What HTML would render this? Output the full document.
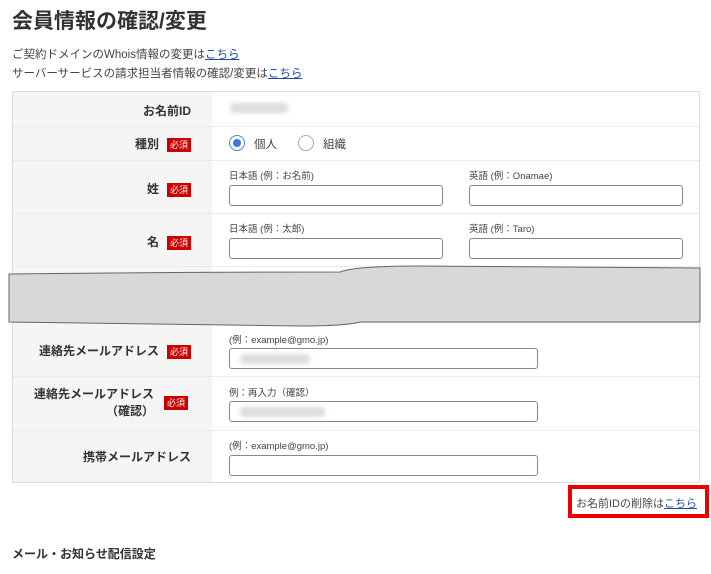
<!DOCTYPE html>
<html><head><meta charset="utf-8"><style>
*{margin:0;padding:0;box-sizing:border-box}
body{width:711px;height:574px;background:#fff;position:relative;overflow:hidden;font-family:"Liberation Sans","Noto Sans CJK JP",sans-serif;color:#333}
.a{position:absolute;white-space:nowrap}
h1{position:absolute;left:12px;top:5px;font-size:21px;font-weight:bold;color:#333}
.t{font-size:11.5px;color:#444}
a{color:#1a4fa0;text-decoration:underline}
.tbl{position:absolute;left:12px;top:91px;width:688px;height:392px;border:1px solid #ddd;background:#fff}
.lab{position:absolute;left:0;width:199px;background:#f5f5f5}
.row{position:absolute;left:0;width:686px;border-top:1px dotted #ddd}
.lb{position:absolute;right:508px;font-size:12px;font-weight:bold;color:#333;white-space:nowrap;text-align:right}
.req{display:inline-block;background:#c00;color:#fff;font-size:9px;padding:1px 3px;font-weight:normal;line-height:12px;margin-left:8px;vertical-align:middle}
.inp{position:absolute;height:21px;border:1px solid #888;border-radius:3px;background:#fff}
.blur{position:absolute;background:#ddd;border-radius:4px;filter:blur(2px)}
.sm{position:absolute;font-size:9.5px;color:#444;white-space:nowrap}
</style></head><body>
<h1>会員情報の確認/変更</h1>
<div class="a t" style="left:12px;top:46px">ご契約ドメインのWhois情報の変更は<a>こちら</a></div>
<div class="a t" style="left:12px;top:65px">サーバーサービスの請求担当者情報の確認/変更は<a>こちら</a></div>
<div class="tbl">
<div class="lab" style="top:0;height:390px"></div>
<div class="row" style="top:34px"></div>
<div class="row" style="top:68px"></div>
<div class="row" style="top:121px"></div>
<div class="row" style="top:174px"></div>
<div class="row" style="top:230px"></div>
<div class="row" style="top:284px"></div>
<div class="row" style="top:338px"></div>
<div class="lb" style="top:10px">お名前ID</div>
<div class="blur" style="left:217px;top:11px;width:58px;height:10px"></div>
<div class="lb" style="top:43px">種別<span class="req">必須</span></div>
<div class="a" style="left:216px;top:43px;width:16px;height:16px;border:1px solid #4a7fd8;border-radius:50%"><div style="position:absolute;left:3px;top:3px;width:8px;height:8px;border-radius:50%;background:#3a78e0"></div></div>
<div class="a t" style="left:241px;top:44px">個人</div>
<div class="a" style="left:285px;top:43px;width:16px;height:16px;border:1px solid #aaa;border-radius:50%"></div>
<div class="a t" style="left:310px;top:44px">組織</div>
<div class="lb" style="top:88px">姓<span class="req">必須</span></div>
<div class="sm" style="left:216px;top:76px">日本語 (例：お名前)</div>
<div class="sm" style="left:456px;top:76px">英語 (例：Onamae)</div>
<div class="inp" style="left:216px;top:93px;width:214px"></div>
<div class="inp" style="left:456px;top:93px;width:214px"></div>
<div class="lb" style="top:141px">名<span class="req">必須</span></div>
<div class="sm" style="left:216px;top:129px">日本語 (例：太郎)</div>
<div class="sm" style="left:456px;top:129px">英語 (例：Taro)</div>
<div class="inp" style="left:216px;top:146px;width:214px"></div>
<div class="inp" style="left:456px;top:146px;width:214px"></div>
<div class="lb" style="top:250px">連絡先メールアドレス<span class="req">必須</span></div>
<div class="sm" style="left:216px;top:240px">(例：example@gmo.jp)</div>
<div class="inp" style="left:216px;top:256px;width:309px"><div class="blur" style="left:10px;top:5px;width:70px;height:10px"></div></div>
<div class="lb" style="top:294px;right:545px;line-height:17px">連絡先メールアドレス<br>（確認）</div>
<div class="req a" style="left:151px;top:304px;margin:0">必須</div>
<div class="sm" style="left:216px;top:293px">例：再入力（確認）</div>
<div class="inp" style="left:216px;top:309px;width:309px"><div class="blur" style="left:10px;top:5px;width:85px;height:10px"></div></div>
<div class="lb" style="top:356px">携帯メールアドレス</div>
<div class="sm" style="left:216px;top:346px">(例：example@gmo.jp)</div>
<div class="inp" style="left:216px;top:363px;width:309px"></div>
</div>
<svg class="a" style="left:0;top:262px" width="711" height="70"><path d="M9 12 Q180 10 340 10 Q355 4 420 4 L700 6 L700 60 L360 60 Q345 64 300 64 L9 60 Z" fill="#d8d8d8" stroke="#666" stroke-width="1"/></svg>
<div class="a" style="left:568px;top:485px;width:141px;height:33px;border:4px solid #e00;font-size:11px;color:#444;padding:6px 0 0 4px">お名前IDの削除は<a>こちら</a></div>
<div class="a" style="left:12px;top:545px;font-size:12px;font-weight:bold;color:#333">メール・お知らせ配信設定</div>
</body></html>
